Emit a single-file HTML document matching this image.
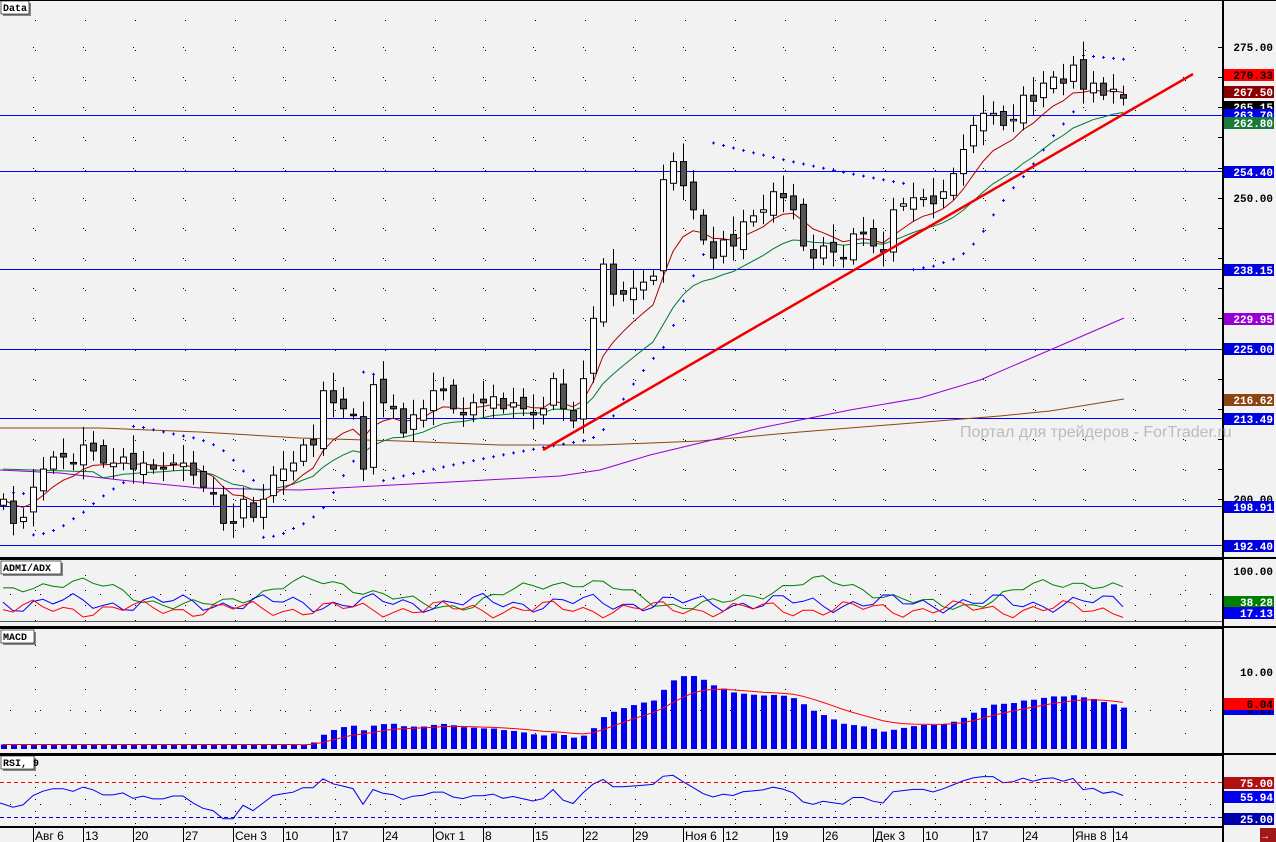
<!DOCTYPE html>
<html><head><meta charset="utf-8">
<style>
html,body{margin:0;padding:0;background:#f2f2f2;}
svg{display:block;font-family:"Liberation Mono","DejaVu Sans Mono",monospace;}
</style></head>
<body>
<svg id="s" width="1276" height="842" viewBox="0 0 1276 842" xmlns="http://www.w3.org/2000/svg">
<rect width="1276" height="842" fill="#f2f2f2"/>
<g id="grid"></g>
<g id="main"></g>
<rect x="0" y="0" width="1276" height="1" fill="#000"/>
<rect x="0" y="557" width="1223" height="3" fill="#000"/>
<rect x="0" y="626" width="1223" height="3" fill="#000"/>
<rect x="0" y="753" width="1223" height="3" fill="#000"/>
<rect x="0" y="826" width="1223" height="2" fill="#000"/>
<rect x="1222" y="0" width="2" height="842" fill="#000"/>
<rect x="1223" y="557" width="53" height="2" fill="#000"/>
<rect x="1223" y="626" width="53" height="2" fill="#000"/>
<rect x="1223" y="753" width="53" height="2" fill="#000"/>
<g id="labels" font-size="11" font-weight="bold"></g>
<g font-size="10" font-weight="bold">
<rect x="3" y="3" width="28" height="13" fill="#888"/><rect x="1" y="1" width="28" height="13" fill="#fff" stroke="#000" stroke-width="0.6"/><text x="3" y="11">Data</text>
<rect x="3" y="563" width="60" height="13" fill="#888"/><rect x="1" y="561" width="60" height="13" fill="#fff" stroke="#000" stroke-width="0.6"/><text x="3" y="571">ADMI/ADX</text>
<rect x="3" y="632" width="33" height="13" fill="#888"/><rect x="1" y="630" width="33" height="13" fill="#fff" stroke="#000" stroke-width="0.6"/><text x="3" y="640">MACD</text>
<rect x="3" y="758" width="33" height="13" fill="#888"/><rect x="1" y="756" width="33" height="13" fill="#fff" stroke="#000" stroke-width="0.6"/><text x="3" y="766">RSI, 9</text>
</g>
<text x="960" y="437" font-family="Liberation Sans,sans-serif" font-size="16" fill="#bbb">Портал для трейдеров - ForTrader.ru</text>
<g id="xaxis" font-family="Liberation Sans,sans-serif" font-size="12" fill="#000"></g>
<rect x="1260" y="828" width="16" height="14" fill="#a01818"/>
<text x="1262" y="839" font-size="10" fill="#fff">→</text>
</svg>
<script>
var NS="http://www.w3.org/2000/svg";
function el(p,t,a,txt){var e=document.createElementNS(NS,t);for(var k in a)e.setAttribute(k,a[k]);if(txt!==undefined)e.textContent=txt;document.getElementById(p).appendChild(e);return e;}
function Y(p){return 47+(275-p)*6.03;}
var kp=[[3,200],[13,196],[23,197],[33,202],[43,205],[53,207],[63,207],[73,206],[83,209],[93,208],[103,206],[113,206],[123,207],[133,205],[143,206],[153,205],[163,205],[173,206],[183,206],[193,204],[203,202],[213,201],[223,196],[233,196],[243,200],[253,197],[263,200],[273,204],[283,205],[293,206],[303,209],[313,209],[323,218],[333,216],[343,215],[353,214],[363,205],[373,219],[383,216],[393,215],[403,211],[413,214],[423,215],[433,218],[443,218],[453,215],[463,214],[473,216],[483,216],[493,217],[503,215],[513,216],[523,215],[533,214],[543,215],[553,220],[563,215],[573,213],[583,220],[593,230],[603,239],[613,234],[623,234],[633,235],[643,236],[653,237],[663,253],[673,256],[683,252],[693,248],[703,243],[713,240],[723,243],[733,242],[743,246],[753,247],[763,248],[773,251],[783,250],[793,248],[803,242],[813,240],[823,242],[833,241],[843,240],[853,244],[863,244],[873,242],[883,241],[893,248],[903,249],[913,250],[923,250],[933,249],[943,251],[953,254],[963,258],[973,262],[983,264],[993,264],[1003,262],[1013,263],[1023,267],[1033,266],[1043,269],[1053,270],[1063,269],[1073,272],[1083,268],[1093,269],[1103,267],[1113,268],[1123,266.5]];
var N=kp.length,C=[],O=[],H=[],L=[],X=[];
for(var i=0;i<N;i++){X.push(kp[i][0]);C.push(kp[i][1]);var o=i?C[i-1]+((i*37)%7-3)*0.3:199;O.push(o);
var w=1+((i*53)%5)*0.5;H.push(Math.max(o,C[i])+w);L.push(Math.min(o,C[i])-w*0.8);}
for(var p=200;p<=275;p+=5){for(var x=33;x<1220;x+=50)el("grid","rect",{x:x,y:Math.round(Y(p)),width:1,height:1,fill:"#000"});}
for(var x=35;x<1220;x+=50){for(var y=20;y<555;y+=30)el("grid","rect",{x:x,y:y,width:1,height:1,fill:"#000"});
for(var y=575;y<625;y+=15)el("grid","rect",{x:x,y:y,width:1,height:1,fill:"#000"});
for(var y=645;y<750;y+=22)el("grid","rect",{x:x,y:y,width:1,height:1,fill:"#000"});
for(var y=775;y<825;y+=12)el("grid","rect",{x:x,y:y,width:1,height:1,fill:"#000"});}
for(var x=10;x<1220;x+=30){el("grid","rect",{x:x,y:594,width:1,height:1,fill:"#000"});el("grid","rect",{x:x,y:710,width:1,height:1,fill:"#000"});el("grid","rect",{x:x,y:804,width:1,height:1,fill:"#000"});}
[263.7,254.4,238.15,225,213.49,198.91,192.4].forEach(function(p){var y=Math.round(Y(p));el("main","rect",{x:0,y:y,width:1222,height:1,fill:"#0000ff"});});
function pl(pts,col,w){el("main","polyline",{points:pts,fill:"none",stroke:col,"stroke-width":w||1});}
pl("0,428 100,428 200,432 300,438 400,441 500,445 600,445 700,441 800,432 900,424 1000,416 1050,411 1124,399","#8b4513");
pl("0,470 60,473 120,480 200,488 300,490 450,482 560,476 600,470 650,455 700,443 760,428 850,410 920,398 980,380 1050,350 1124,318","#9400d3");
function ema(a,n){var k=2/(n+1),r=[a[0]];for(var i=1;i<a.length;i++)r.push(a[i]*k+r[i-1]*(1-k));return r;}
var e1=ema(C,8),e2=ema(C,18);for(var i=0;i<10;i++)e2[i]=Math.max(e2[i],205-i*0.05);
function line(a,col,w){var s="";for(var i=0;i<a.length;i++)s+=X[i]+","+Y(a[i]).toFixed(1)+" ";pl(s,col,w);}
line(e2,"#007a33");line(e1,"#b00000");
var up=true,af=.02,ep=H[0],sar=L[0]-2;
for(var i=1;i<N;i++){sar=sar+af*(ep-sar);
if(up){if(L[i]<sar){up=false;sar=ep;ep=L[i];af=.02;}else{if(H[i]>ep){ep=H[i];af=Math.min(af+.02,.2);}}}
else{if(H[i]>sar){up=true;sar=ep;ep=H[i];af=.02;}else{if(L[i]<ep){ep=L[i];af=Math.min(af+.02,.2);}}}
var y=Y(sar);el("main","rect",{x:X[i]-1,y:y-1,width:3,height:1,fill:"#0000ee"});el("main","rect",{x:X[i],y:y-2,width:1,height:3,fill:"#0000ee"});}
for(var i=0;i<N;i++){var x=X[i];el("main","line",{x1:x+0.5,y1:Y(H[i]),x2:x+0.5,y2:Y(L[i]),stroke:"#000"});
var t=Y(Math.max(O[i],C[i])),b=Y(Math.min(O[i],C[i]));if(b-t<1.5)b=t+1.5;
el("main","rect",{x:x-2.5,y:t,width:6,height:b-t,fill:C[i]>=O[i]?"#fff":"#555",stroke:"#000","stroke-width":1});}
el("main","line",{x1:543,y1:450,x2:1193,y2:74,stroke:"#ee0000","stroke-width":2.5});
function rnd(i,s){return Math.sin(i*1.7+s)*0.5+Math.sin(i*0.61+s*2)*0.5;}
var g="",b2="",r="";for(var i=0;i<N;i++){var x=X[i];
g+=x+","+(594-12*Math.sin(i*0.25)-7*rnd(i,1)).toFixed(1)+" ";
b2+=x+","+(603-10*rnd(i,2)).toFixed(1)+" ";
r+=x+","+(609-9*rnd(i,3)).toFixed(1)+" ";}
pl(g,"#008000");pl(b2,"#0000ff");pl(r,"#ff0000");
el("main","line",{x1:0,y1:621.5,x2:1222,y2:621.5,stroke:"#555"});
var m12=ema(C,12),m26=ema(C,26),md=m12.map(function(v,i){return v-m26[i];}),mx=Math.max.apply(null,md);
for(var i=0;i<30;i++)md[i]=0.6;
var sg=ema(md,9);
var sc=73/mx,base=749,sp="";
for(var i=0;i<N;i++){var hgt=Math.max(4,md[i]*sc);el("main","rect",{x:X[i]-2,y:base-hgt,width:6,height:hgt,fill:"#0000ee"});sp+=X[i]+","+(base-Math.max(2,sg[i]*sc)).toFixed(1)+" ";}
pl(sp,"#ff0000");
var ag=1,al=1,rs="";for(var i=1;i<N;i++){var d=C[i]-C[i-1],gg=Math.max(d,0),ll=Math.max(-d,0);
ag=(ag*8+gg)/9;al=(al*8+ll)/9;var rv=100-100/(1+ag/al);
rs+=X[i]+","+(782+(75-rv)*0.72).toFixed(1)+" ";}
pl("0,803 "+rs,"#0000ee");
el("main","line",{x1:0,y1:782.5,x2:1222,y2:782.5,stroke:"#ee0000","stroke-dasharray":"4,3"});
el("main","line",{x1:0,y1:817.5,x2:1222,y2:817.5,stroke:"#0000cc","stroke-dasharray":"4,3"});
function lab(y,t,bg,fg){el("labels","rect",{x:1224,y:y-6,width:50,height:12,fill:bg});el("labels","text",{x:1273,y:y+4,"text-anchor":"end",fill:fg},t);}
function tick(y){el("labels","rect",{x:1218,y:y,width:4,height:1,fill:"#000"});}
for(var p=200;p<=275;p+=5)tick(Math.round(Y(p)));
lab(47,"275.00","#f2f2f2","#000");lab(198,"250.00","#f2f2f2","#000");lab(499,"200.00","#f2f2f2","#000");
lab(75,"270.33","#ff0000","#000");lab(92,"267.50","#8b0000","#fff");lab(107,"265.15","#000","#fff");
lab(115,"263.70","#0000ee","#fff");lab(123,"262.80","#1a7a3a","#fff");lab(172,"254.40","#0000dd","#fff");
lab(270,"238.15","#0000dd","#fff");lab(319,"229.95","#9400d3","#fff");lab(349,"225.00","#0000dd","#fff");
lab(400,"216.62","#8b4513","#fff");lab(419,"213.49","#0000dd","#fff");lab(507,"198.91","#0000dd","#fff");lab(546,"192.40","#0000dd","#fff");
lab(571,"100.00","#f2f2f2","#000");lab(602,"38.28","#008000","#fff");lab(613,"17.13","#0000ee","#fff");
lab(672,"10.00","#f2f2f2","#000");lab(709,"5.27","#0000ee","#000");lab(704,"6.04","#ff0000","#000");
lab(783,"75.00","#b01010","#fff");lab(797,"55.94","#0000ee","#fff");lab(819,"25.00","#0000aa","#fff");
var dl=["Авг 6","13","20","27","Сен 3","10","17","24","Окт 1","8","15","22","29","Ноя 6","12","19","26","Дек 3","10","17","24","Янв 8","14"];
var dxx=[33,83,133,183,233,283,333,383,433,483,533,583,633,683,723,773,823,873,923,973,1023,1073,1113];
for(var i=0;i<dl.length;i++){el("xaxis","rect",{x:dxx[i],y:828,width:1,height:14,fill:"#000"});el("xaxis","text",{x:dxx[i]+2,y:840},dl[i]);}
</script>
</body></html>
